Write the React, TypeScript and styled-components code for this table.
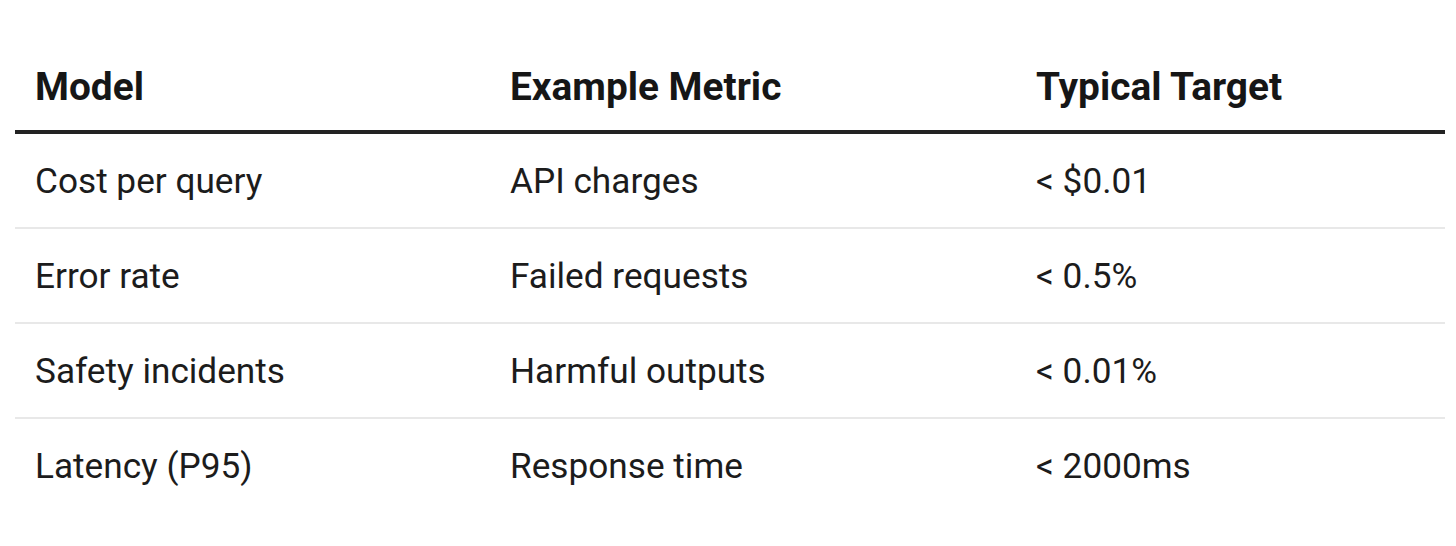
import React from "react";
import styled, { createGlobalStyle } from "styled-components";

const Global = createGlobalStyle`
  html, body { margin: 0; padding: 0; background: #ffffff; }
  body { font-family: Roboto, "Liberation Sans", sans-serif; color: #1c1c1c; }
`;

const Page = styled.div`
  width: 1456px;
  height: 546px;
  padding: 42px 11px 0 15px;
  box-sizing: border-box;
`;

const Table = styled.div`
  width: 1430px;
  display: grid;
  grid-template-columns: 475px 526px 429px;
`;

const HeadCell = styled.div`
  font-weight: 700;
  font-size: 38.8px;
  height: 88px;
  display: flex;
  align-items: center;
  padding-left: 20px;
  border-bottom: 4px solid #232323;
  color: #161616;
`;

const Cell = styled.div<{ $last?: boolean }>`
  font-size: 35.2px;
  height: 93px;
  display: flex;
  align-items: center;
  padding-left: 20px;
  border-bottom: ${(p) => (p.$last ? "none" : "2px solid #e8e8e8")};
  color: #1c1c1c;
`;

const rows = [
  ["Cost per query", "API charges", "< $0.01"],
  ["Error rate", "Failed requests", "< 0.5%"],
  ["Safety incidents", "Harmful outputs", "< 0.01%"],
  ["Latency (P95)", "Response time", "< 2000ms"],
];

export default function App() {
  return (
    <>
      <Global />
      <Page>
        <Table>
          <HeadCell>Model</HeadCell>
          <HeadCell>Example Metric</HeadCell>
          <HeadCell>Typical Target</HeadCell>
          {rows.map((r, i) =>
            r.map((c, j) => (
              <Cell key={`${i}-${j}`} $last={i === rows.length - 1}>
                {c}
              </Cell>
            ))
          )}
        </Table>
      </Page>
    </>
  );
}
